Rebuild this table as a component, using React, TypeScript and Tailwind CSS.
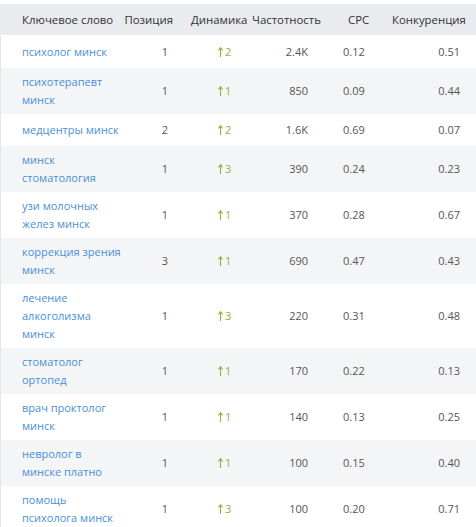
import React from "react";

type Row = { k: string; p: string; d: string; f: string; c: string; k2: string };

const rows: Row[] = [
  { k: "психолог минск", p: "1", d: "2", f: "2.4K", c: "0.12", k2: "0.51" },
  { k: "психотерапевт минск", p: "1", d: "1", f: "850", c: "0.09", k2: "0.44" },
  { k: "медцентры минск", p: "2", d: "2", f: "1.6K", c: "0.69", k2: "0.07" },
  { k: "минск стоматология", p: "1", d: "3", f: "390", c: "0.24", k2: "0.23" },
  { k: "узи молочных желез минск", p: "1", d: "1", f: "370", c: "0.28", k2: "0.67" },
  { k: "коррекция зрения минск", p: "3", d: "1", f: "690", c: "0.47", k2: "0.43" },
  { k: "лечение алкоголизма минск", p: "1", d: "3", f: "220", c: "0.31", k2: "0.48" },
  { k: "стоматолог ортопед", p: "1", d: "1", f: "170", c: "0.22", k2: "0.13" },
  { k: "врач проктолог минск", p: "1", d: "1", f: "140", c: "0.13", k2: "0.25" },
  { k: "невролог в минске платно", p: "1", d: "1", f: "100", c: "0.15", k2: "0.40" },
  { k: "помощь психолога минск", p: "1", d: "3", f: "100", c: "0.20", k2: "0.71" },
];

function Arrow() {
  return (
    <svg width="5" height="10" viewBox="0 0 5 10" className="inline-block mr-[2px] -mt-[2px] align-middle">
      <path d="M2.5 1 L2.5 10" stroke="#8cb43c" strokeWidth="1.1" fill="none" />
      <path d="M0.4 3.4 L2.5 0.8 L4.6 3.4" stroke="#8cb43c" strokeWidth="1.1" fill="none" />
    </svg>
  );
}

export default function App() {
  return (
    <div
      className="w-[476px] h-[527px] bg-white pt-[4px] overflow-hidden leading-[18px]"
      style={{ fontFamily: '"Open Sans", "Noto Sans", sans-serif' }}
    >
      <div className="flex h-[31px] items-center bg-[#e9ebee] text-[#333333] text-[11.4px]">
        <div className="w-[122px] shrink-0 pl-[22px]">Ключевое слово</div>
        <div className="w-[58px] shrink-0 text-right pr-[7px]">Позиция</div>
        <div className="w-[68px] shrink-0 pl-[11px]">Динамика</div>
        <div className="w-[77px] shrink-0 pl-[4px]">Частотность</div>
        <div className="w-[55px] shrink-0 pl-[23px]">CPC</div>
        <div className="flex-1 pl-[12px]">Конкуренция</div>
      </div>
      <div className="border-l border-[#e6e6e6] text-[11px]">
        {rows.map((r, i) => (
          <div
            key={i}
            className={`flex items-center py-[5px] ${i % 2 === 1 ? "bg-[#f4f5f7]" : "bg-white"} ${i === 0 ? "min-h-[33px]" : "min-h-[32px]"}`}
          >
            <div className="w-[122px] shrink-0 pl-[21px] pr-[1px] text-[#4a8fd8]">{r.k}</div>
            <div className="w-[58px] shrink-0 text-right pr-[13px] text-[#555555]">{r.p}</div>
            <div className="w-[68px] shrink-0 pl-[37px] text-[#8cb43c]">
              <Arrow />
              {r.d}
            </div>
            <div className="w-[77px] shrink-0 text-right pr-[18px] text-[#555555]">{r.f}</div>
            <div className="w-[55px] shrink-0 pl-[17px] text-[#555555]">{r.c}</div>
            <div className="flex-1 text-right pr-[16px] text-[#555555]">{r.k2}</div>
          </div>
        ))}
      </div>
    </div>
  );
}
